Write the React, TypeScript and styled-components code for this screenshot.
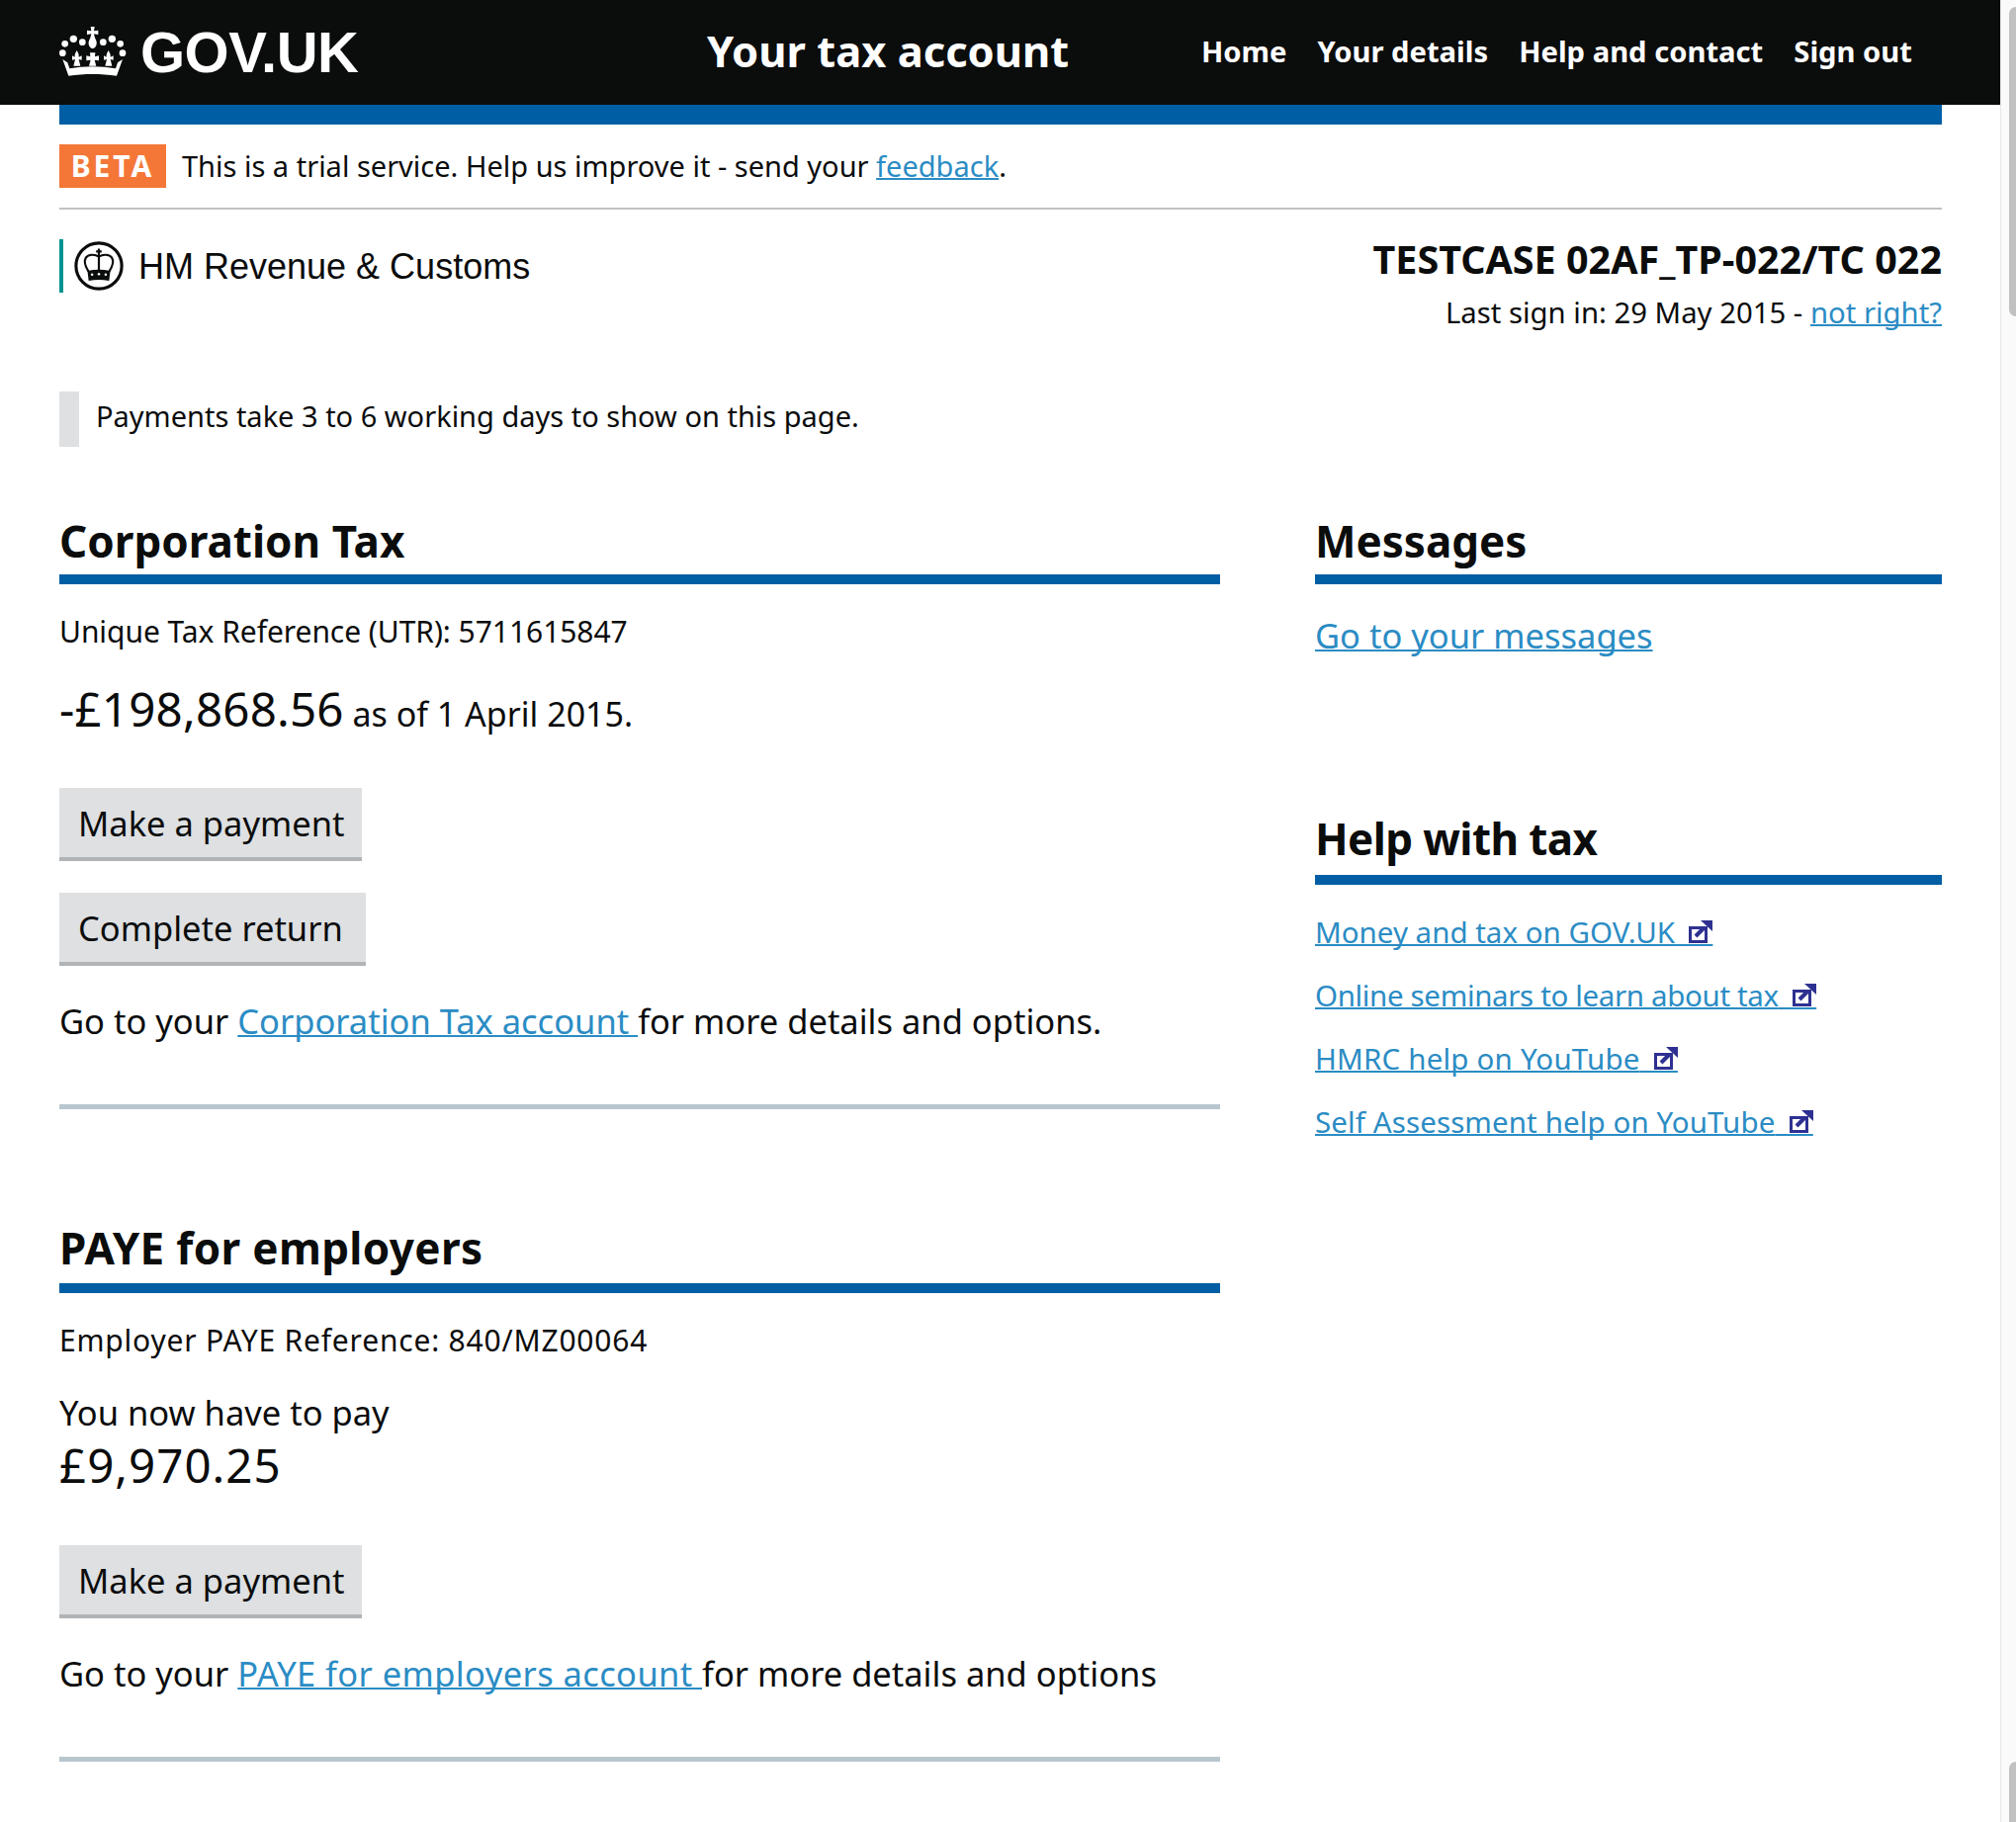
import React from "react";
import styled, { createGlobalStyle } from "styled-components";

const GlobalStyle = createGlobalStyle`
  html, body {
    margin: 0;
    height: 100%;
    overflow: hidden;
    background: #fff;
  }
  body {
    font-family: "Noto Sans", Arial, sans-serif;
    color: #0b0c0c;
    text-decoration-skip-ink: none;
  }
  a {
    color: #2b8cc4;
    text-decoration-skip-ink: none;
    text-decoration-thickness: 2px;
  }
`;

const CrownLogo = () => (
  <svg width="68" height="50" viewBox="33 33 204 150" fill="#fff" aria-hidden="true">
    <circle cx="43" cy="113" r="10" />
    <circle cx="50" cy="85" r="10" />
    <circle cx="76" cy="70" r="11" />
    <circle cx="103" cy="80" r="10" />
    <circle cx="166" cy="80" r="10" />
    <circle cx="193" cy="70" r="11" />
    <circle cx="218" cy="85" r="10" />
    <circle cx="225" cy="113" r="10" />
    <path d="M128 33h12l-2 13 13-2v13l-13-2 3 12c6 10 7 18 3 25-3 5-7 7-10 7s-7-2-10-7c-4-7-3-15 3-25l3-12-13 2V44l13 2z" />
    <path d="M126 112h16l-1 12 12-3v15l-13-2 5 18h-22l5-18-13 2v-15l12 3z" />
    <path d="M86 105c5 8 7 14 6 20l9-4v13l-9-2 5 20H76l5-20-9 2v-13l8 4c-1-6 1-12 6-20z" />
    <path d="M182 105c5 8 7 14 6 20l9-4v13l-9-2 5 20h-21l5-20-9 2v-13l8 4c-1-6 1-12 6-20z" />
    <path d="M43 132l15 10 6 18c45-8 95-8 140 0l6-18 15-10-18 50c-48-7-98-7-146 0z" />
  </svg>
);

const RevenueCrest = () => (
  <svg width="50" height="50" viewBox="0 0 160 160" aria-hidden="true">
    <circle cx="80" cy="80" r="74" fill="#fff" stroke="#0b0c0c" strokeWidth="10" />
    <path d="M80 24v24M71 33h18" stroke="#0b0c0c" strokeWidth="7" fill="none" />
    <path
      d="M80 50c-12-8-34-9-42 3-7 11-2 28 8 44M80 50c12-8 34-9 42 3 7 11 2 28-8 44M80 50v46"
      stroke="#0b0c0c"
      strokeWidth="7"
      fill="none"
    />
    <path d="M43 96c25-5 49-5 74 0l-4 32c-22-4-44-4-66 0z" fill="#0b0c0c" />
    <circle cx="58" cy="108" r="4" fill="#fff" />
    <circle cx="80" cy="106" r="4" fill="#fff" />
    <circle cx="102" cy="108" r="4" fill="#fff" />
  </svg>
);

const ExternalIcon = () => (
  <svg width="24" height="23" viewBox="0 0 24 23" fill="none" aria-hidden="true">
    <rect x="1.5" y="7.5" width="16" height="14" stroke="#2e3191" strokeWidth="3" />
    <path d="M7 16l8-8" stroke="#2e3191" strokeWidth="4" />
    <path d="M12 0h12v11z" fill="#2e3191" />
  </svg>
);

const helpLinks = [
  { label: "Money and tax on GOV.UK", spacing: "0" },
  { label: "Online seminars to learn about tax", spacing: "-0.35px" },
  { label: "HMRC help on YouTube", spacing: "0.2px" },
  { label: "Self Assessment help on YouTube", spacing: "0.1px" },
];

export default function App() {
  return (
    <Page>
      <GlobalStyle />
      <Main>
        <Header>
          <Logo href="#">
            <CrownLogo />
            <LogoText>GOV.UK</LogoText>
          </Logo>
          <ServiceName>Your tax account</ServiceName>
          <Nav>
            <NavLink href="#">Home</NavLink>
            <NavLink href="#">Your details</NavLink>
            <NavLink href="#">Help and contact</NavLink>
            <NavLink href="#">Sign out</NavLink>
          </Nav>
        </Header>

        <Content>
          <BlueBar />
          <BetaRow>
            <BetaTag>BETA</BetaTag>
            <BetaText>
              This is a trial service. Help us improve it - send your <a href="#">feedback</a>.
            </BetaText>
          </BetaRow>

          <AccountRow>
            <Department>
              <RevenueCrest />
              <DepartmentName>HM Revenue &amp; Customs</DepartmentName>
            </Department>
            <Account>
              <AccountName>TESTCASE 02AF_TP-022/TC 022</AccountName>
              <LastSignIn>
                Last sign in: 29 May 2015 - <a href="#">not right?</a>
              </LastSignIn>
            </Account>
          </AccountRow>

          <Notice>
            <NoticeText>Payments take 3 to 6 working days to show on this page.</NoticeText>
          </Notice>

          <Columns>
            <div>
              <section>
                <SectionTitle>Corporation Tax</SectionTitle>
                <Reference $spacing="-0.05px">Unique Tax Reference (UTR): 5711615847</Reference>
                <AmountRow>
                  <Amount>-£198,868.56</Amount> as of 1 April 2015.
                </AmountRow>
                <Buttons>
                  <Button $width="306px">Make a payment</Button>
                  <Button $width="310px">Complete return</Button>
                </Buttons>
                <BodyText>
                  Go to your <a href="#">Corporation Tax account&nbsp;</a>for more details and options.
                </BodyText>
                <Divider />
              </section>

              <PayeSection>
                <SectionTitle $spacing="0.35px" $gap="7px">
                  PAYE for employers
                </SectionTitle>
                <Reference $spacing="0.8px">Employer PAYE Reference: 840/MZ00064</Reference>
                <PayLabel>You now have to pay</PayLabel>
                <PayAmount>£9,970.25</PayAmount>
                <Buttons>
                  <Button $width="306px">Make a payment</Button>
                </Buttons>
                <BodyText>
                  Go to your <PayeLink href="#">PAYE for employers account&nbsp;</PayeLink>for more details and
                  options
                </BodyText>
                <Divider />
              </PayeSection>
            </div>

            <div>
              <SectionTitle>Messages</SectionTitle>
              <MessagesLink href="#">Go to your messages</MessagesLink>
              <HelpTitle $spacing="-0.6px" $gap="8px">
                Help with tax
              </HelpTitle>
              <HelpList>
                {helpLinks.map(({ label, spacing }) => (
                  <li key={label}>
                    <HelpLink href="#" $spacing={spacing}>
                      {label}
                      <IconSpace>
                        &nbsp;&nbsp;&nbsp;&nbsp;&nbsp;
                        <ExternalIcon />
                      </IconSpace>
                    </HelpLink>
                  </li>
                ))}
              </HelpList>
            </div>
          </Columns>
        </Content>
      </Main>
      <Scrollbar>
        <TopThumb />
        <BottomThumb />
      </Scrollbar>
    </Page>
  );
}

// Styled Components

const Page = styled.div`
  display: flex;
  height: 1843px;
  overflow: hidden;
`;

const Main = styled.div`
  flex: 1;
  min-width: 0;
`;

const Scrollbar = styled.div`
  width: 7px;
  padding-left: 8px;
  background: #fafafa;
  border-left: 1px solid #e7e7e7;
  box-sizing: content-box;
  margin-left: -1px;
  display: flex;
  flex-direction: column;
  justify-content: space-between;
`;

const TopThumb = styled.div`
  margin-top: 7px;
  height: 313px;
  background: #c1c1c1;
  border-radius: 7px 0 0 7px;
`;

const BottomThumb = styled.div`
  height: 61px;
  background: #c1c1c1;
  border-radius: 7px 0 0 0;
`;

const Header = styled.header`
  box-sizing: border-box;
  height: 106px;
  background: #0b0c0c;
  color: #fff;
  display: flex;
  align-items: center;
  padding: 0 90px 2px 60px;
`;

const Logo = styled.a`
  display: flex;
  align-items: center;
  gap: 14px;
  width: 655px;
  color: #fff;
  text-decoration: none;
`;

const LogoText = styled.span`
  font-family: "Liberation Sans", Arial, sans-serif;
  font-size: 58px;
  font-weight: 700;
  letter-spacing: -0.5px;
`;

const ServiceName = styled.div`
  font-size: 43.5px;
  font-weight: 700;
  flex: 1;
  padding-bottom: 2px;
`;

const Nav = styled.nav`
  display: flex;
  gap: 31px;
`;

const NavLink = styled.a`
  color: #fff;
  font-size: 29.2px;
  font-weight: 700;
  text-decoration: none;
`;

const Content = styled.main`
  padding: 0 60px;
`;

const BlueBar = styled.div`
  height: 20px;
  background: #005ea5;
`;

const BetaRow = styled.div`
  display: flex;
  align-items: center;
  gap: 16px;
  margin-top: 20px;
  padding-bottom: 20px;
  border-bottom: 2px solid #bfc1c3;
`;

const BetaTag = styled.strong`
  width: 108px;
  height: 44px;
  padding-bottom: 2px;
  box-sizing: border-box;
  background: #f47738;
  color: #fff;
  font-size: 30px;
  font-weight: 700;
  letter-spacing: 3px;
  display: flex;
  align-items: center;
  justify-content: center;
`;

const BetaText = styled.p`
  margin: 0 0 2px;
  font-size: 29px;
`;

const AccountRow = styled.div`
  display: flex;
  justify-content: space-between;
  align-items: flex-start;
  margin-top: 30px;
`;

const Department = styled.div`
  display: flex;
  align-items: center;
  gap: 15px;
  height: 54px;
  padding-left: 11px;
  border-left: 4px solid #009390;
`;

const DepartmentName = styled.span`
  font-family: "Liberation Sans", Arial, sans-serif;
  font-size: 36px;
  padding-top: 2px;
`;

const Account = styled.div`
  text-align: right;
  margin-top: -2px;
`;

const AccountName = styled.div`
  font-size: 39.5px;
  line-height: 44px;
  font-weight: 700;
`;

const LastSignIn = styled.div`
  margin-top: 12px;
  font-size: 29.3px;
  line-height: 40px;
`;

const Notice = styled.div`
  box-sizing: border-box;
  margin-top: 60px;
  height: 56px;
  border-left: 20px solid #dee0e2;
  padding: 0 0 7px 17px;
  display: flex;
  align-items: center;
`;

const NoticeText = styled.p`
  margin: 0;
  font-size: 29px;
`;

const Columns = styled.div`
  display: grid;
  grid-template-columns: 1174px 634px;
  column-gap: 96px;
  margin-top: 66px;
`;

const SectionTitle = styled.h2<{ $spacing?: string; $gap?: string }>`
  margin: 0;
  font-size: 44px;
  line-height: 58px;
  font-weight: 700;
  letter-spacing: ${(p) => p.$spacing ?? "0"};
  padding-bottom: ${(p) => p.$gap ?? "5px"};
  border-bottom: 10px solid #005ea5;
`;

const HelpTitle = styled(SectionTitle)`
  margin-top: 151px;
`;

const Reference = styled.p<{ $spacing?: string }>`
  margin: 28px 0 0;
  font-size: 30px;
  line-height: 40px;
  letter-spacing: ${(p) => p.$spacing ?? "0"};
`;

const AmountRow = styled.p`
  margin: 28px 0 0;
  font-size: 34px;
  line-height: 60px;
`;

const Amount = styled.span`
  font-size: 47.5px;
  line-height: 60px;
  letter-spacing: 0.2px;
`;

const PayAmount = styled.div`
  margin-top: 1px;
  padding-bottom: 6px;
  font-size: 47.5px;
  line-height: 60px;
  letter-spacing: 1px;
`;

const PayLabel = styled.p`
  margin: 31px 0 0;
  font-size: 34.5px;
  line-height: 44px;
`;

const Buttons = styled.div`
  margin-top: 45px;
  display: flex;
  flex-direction: column;
  align-items: flex-start;
  gap: 32px;
`;

const Button = styled.button<{ $width: string }>`
  box-sizing: border-box;
  width: ${(p) => p.$width};
  height: 74px;
  padding: 0 0 0 19px;
  border: none;
  border-bottom: 4px solid #b1b4b6;
  border-radius: 0;
  background: #dee0e2;
  color: #0b0c0c;
  font-family: inherit;
  font-size: 34.5px;
  text-align: left;
`;

const BodyText = styled.p`
  margin: 31px 0 0;
  font-size: 34.5px;
  line-height: 50px;
`;

const PayeLink = styled.a`
  letter-spacing: 0.4px;
`;

const Divider = styled.hr`
  margin: 59px 0 0;
  height: 5px;
  border: none;
  background: #b8c6ce;
`;

const PayeSection = styled.section`
  margin-top: 111px;
`;

const MessagesLink = styled.a`
  display: block;
  margin-top: 27px;
  font-size: 34.5px;
  line-height: 50px;
`;

const HelpList = styled.ul`
  list-style: none;
  margin: 28px 0 0;
  padding: 0;
  display: flex;
  flex-direction: column;
  gap: 24px;
  font-size: 29.5px;
  line-height: 40px;
`;

const HelpLink = styled.a<{ $spacing: string }>`
  letter-spacing: ${(p) => p.$spacing};
`;

const IconSpace = styled.span`
  position: relative;
  letter-spacing: 0;

  svg {
    position: absolute;
    right: 0;
    top: 9px;
  }
`;
